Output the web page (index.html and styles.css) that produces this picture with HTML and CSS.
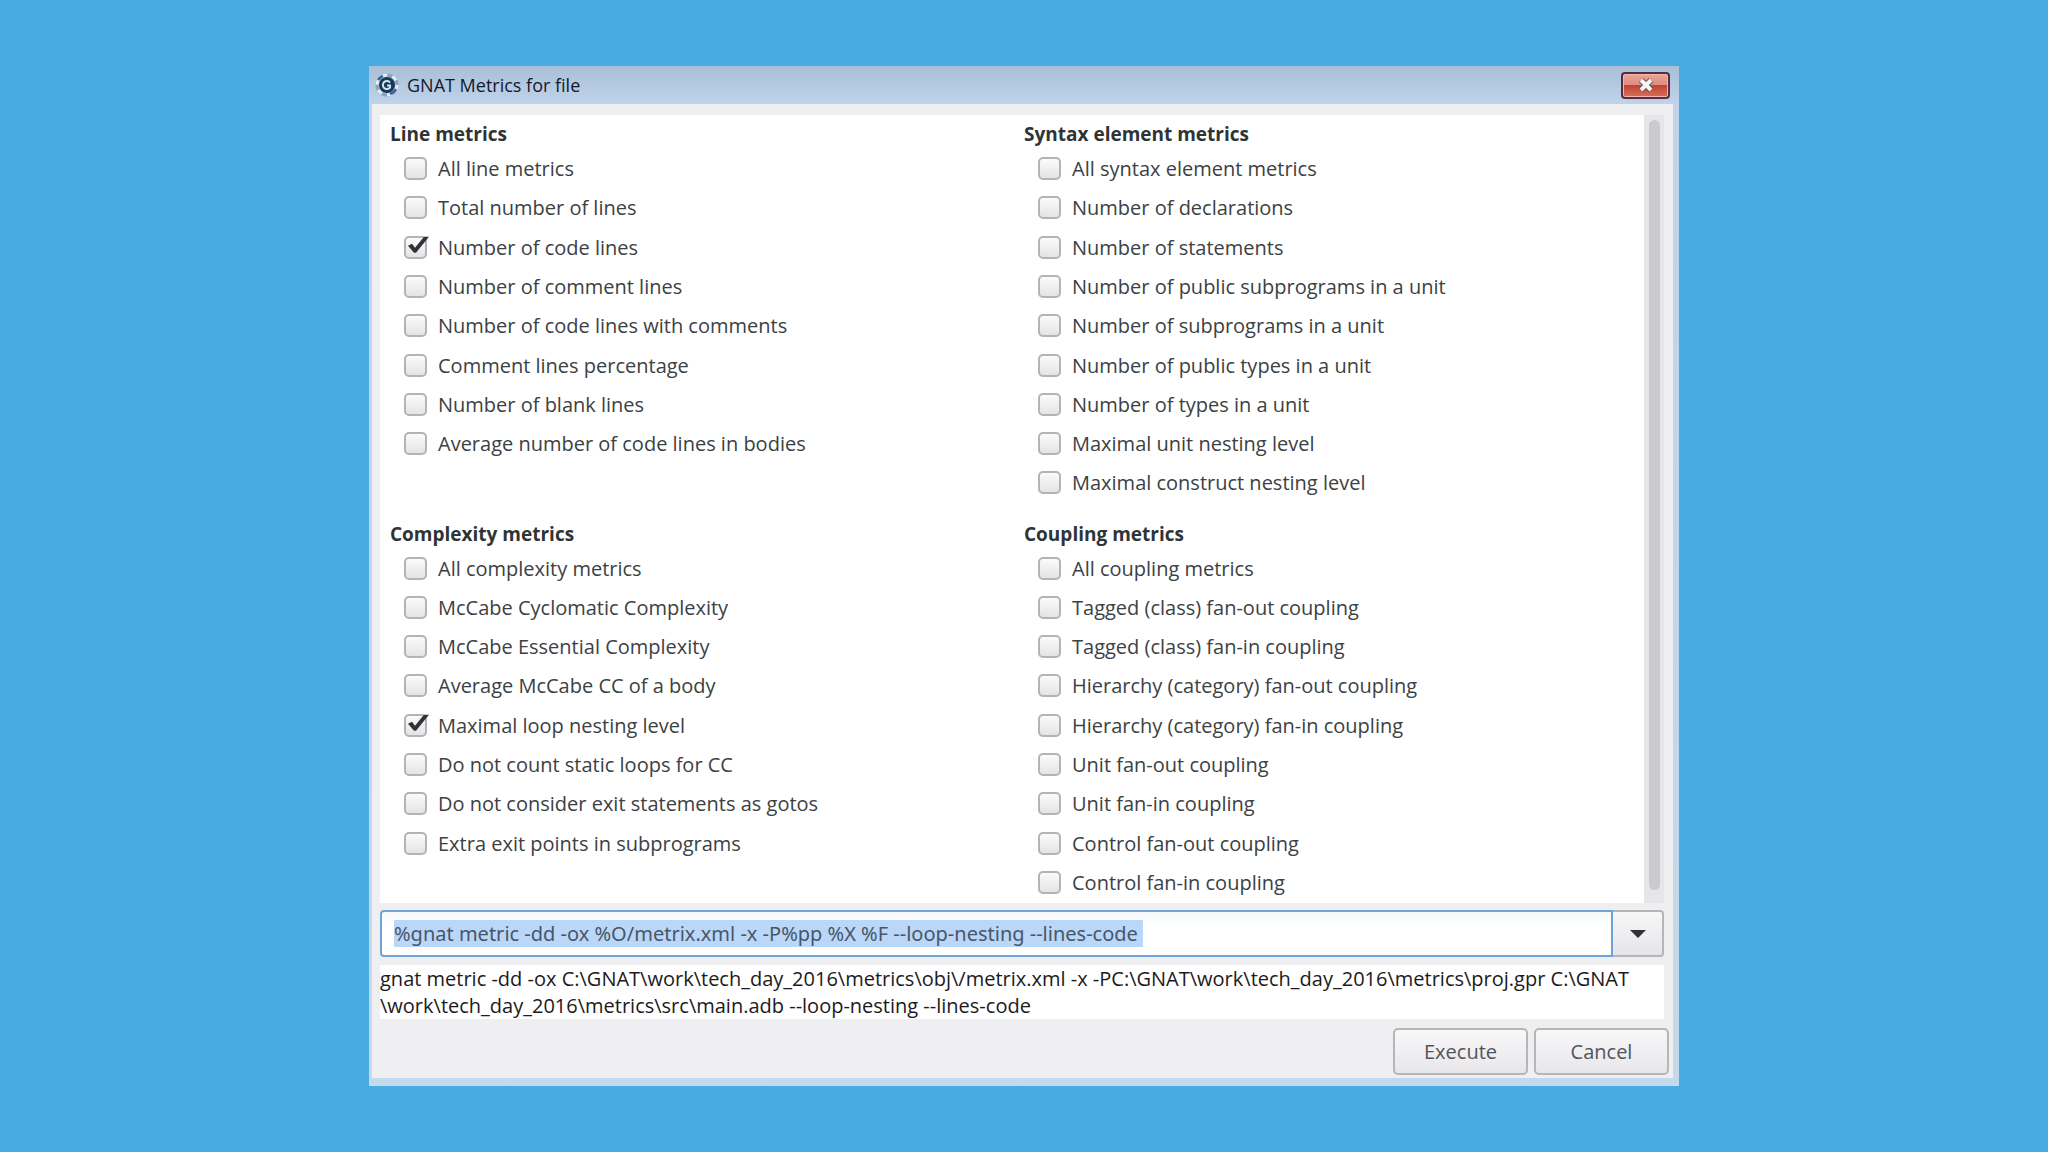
FILE: index.html
```
<!DOCTYPE html>
<html lang="en">
  <head>
    <meta charset="utf-8">
    <title>GNAT Metrics for file</title>
    <link rel="stylesheet" href="styles.css">
  </head>

  <body onload="document.getElementById('command').select()">
    <div class="window">
      <div class="titlebar">
        <svg class="logo" viewBox="0 0 24 24" aria-hidden="true">
          <circle cx="12" cy="12" r="10" fill="none" stroke="#8fa3bb" stroke-width="3"/>
          <circle cx="12" cy="12" r="10" fill="none" stroke="#e8edf0" stroke-width="3" stroke-dasharray="5 5.5"/>
          <path d="M3 7a10 10 0 0 1 5-4M21 16a10 10 0 0 1-6 5" fill="none" stroke="#3a5c96" stroke-width="2"/>
          <circle cx="12" cy="12" r="8" fill="#143a5e"/>
          <path d="M15 9.5a4 4 0 1 0 0 5v-2h-3" fill="none" stroke="#d5e2ec" stroke-width="2"/>
        </svg>
        <h1>GNAT Metrics for file</h1>
        <button class="close" type="button" aria-label="Close">
          <svg viewBox="0 0 18 14" aria-hidden="true">
            <path d="M4 2l10 10M14 2L4 12" fill="none" stroke="#6b4a4c" stroke-width="6"/>
            <path d="M4 2l10 10M14 2L4 12" fill="none" stroke="#f6f4f4" stroke-width="4"/>
          </svg>
        </button>
      </div>

      <form class="content">
        <div class="scrolled">
          <div class="metrics">
            <section class="group">
              <h2>Line metrics</h2>
              <label><input type="checkbox">All line metrics</label>
              <label><input type="checkbox">Total number of lines</label>
              <label><input type="checkbox" checked>Number of code lines</label>
              <label><input type="checkbox">Number of comment lines</label>
              <label><input type="checkbox">Number of code lines with comments</label>
              <label><input type="checkbox">Comment lines percentage</label>
              <label><input type="checkbox">Number of blank lines</label>
              <label><input type="checkbox">Average number of code lines in bodies</label>
            </section>

            <section class="group">
              <h2>Syntax element metrics</h2>
              <label><input type="checkbox">All syntax element metrics</label>
              <label><input type="checkbox">Number of declarations</label>
              <label><input type="checkbox">Number of statements</label>
              <label><input type="checkbox">Number of public subprograms in a unit</label>
              <label><input type="checkbox">Number of subprograms in a unit</label>
              <label><input type="checkbox">Number of public types in a unit</label>
              <label><input type="checkbox">Number of types in a unit</label>
              <label><input type="checkbox">Maximal unit nesting level</label>
              <label><input type="checkbox">Maximal construct nesting level</label>
            </section>

            <section class="group">
              <h2>Complexity metrics</h2>
              <label><input type="checkbox">All complexity metrics</label>
              <label><input type="checkbox">McCabe Cyclomatic Complexity</label>
              <label><input type="checkbox">McCabe Essential Complexity</label>
              <label><input type="checkbox">Average McCabe CC of a body</label>
              <label><input type="checkbox" checked>Maximal loop nesting level</label>
              <label><input type="checkbox">Do not count static loops for CC</label>
              <label><input type="checkbox">Do not consider exit statements as gotos</label>
              <label><input type="checkbox">Extra exit points in subprograms</label>
            </section>

            <section class="group">
              <h2>Coupling metrics</h2>
              <label><input type="checkbox">All coupling metrics</label>
              <label><input type="checkbox">Tagged (class) fan-out coupling</label>
              <label><input type="checkbox">Tagged (class) fan-in coupling</label>
              <label><input type="checkbox">Hierarchy (category) fan-out coupling</label>
              <label><input type="checkbox">Hierarchy (category) fan-in coupling</label>
              <label><input type="checkbox">Unit fan-out coupling</label>
              <label><input type="checkbox">Unit fan-in coupling</label>
              <label><input type="checkbox">Control fan-out coupling</label>
              <label><input type="checkbox">Control fan-in coupling</label>
            </section>
          </div>
          <div class="scrollbar"><div class="thumb"></div></div>
        </div>

        <div class="combo">
          <input id="command" type="text" aria-label="Command" spellcheck="false" autocomplete="off" value="%gnat metric -dd -ox %O/metrix.xml -x -P%pp %X %F --loop-nesting --lines-code ">
          <button type="button" aria-label="Previous commands">
            <svg viewBox="0 0 16 8" aria-hidden="true"><path d="M0 0h16L8 8z" fill="#2e3436"/></svg>
          </button>
        </div>

        <p class="preview">gnat metric -dd -ox C:\GNAT\work\tech_day_2016\metrics\obj\/metrix.xml -x -PC:\GNAT\work\tech_day_2016\metrics\proj.gpr C:\GNAT<wbr>\work\tech_day_2016\metrics\src\main.adb --loop-nesting --lines-code</p>

        <div class="actions">
          <button type="button">Execute</button>
          <button type="button">Cancel</button>
        </div>
      </form>
    </div>
  </body>
</html>
```
FILE: styles.css
```
* {
  box-sizing: border-box;
}

body {
  display: flex;
  min-height: 100vh;
  margin: 0;
  padding: 66px 369px;
  background: #4aabe2;
  color: #3c4143;
  font: 20px/27px "Open Sans", "Noto Sans", sans-serif;
}

button,
input {
  margin: 0;
  color: inherit;
  font: inherit;
}

/* window frame */
.window {
  display: flex;
  flex: 1;
  flex-direction: column;
  min-width: 0;
  padding: 0 6px 8px 3px;
  background: linear-gradient(#a9bfd7, #bfd4ea 38px, #c3d9ec);
}

.titlebar {
  display: flex;
  align-items: center;
  height: 38px;
  padding-left: 3px;
}

.logo {
  width: 24px;
  height: 24px;
  margin-right: 8px;
}

.titlebar h1 {
  flex: 1;
  margin: 0;
  color: #14182c;
  font-size: 18px;
  font-weight: 400;
}

.close {
  display: flex;
  align-items: center;
  justify-content: center;
  width: 49px;
  height: 27px;
  margin-right: 3px;
  padding: 0;
  border: 2px solid #5a2c40;
  border-radius: 4px;
  background: linear-gradient(#eaa598, #dd8e80 46%, #c2452f 50%, #d4705c);
  box-shadow: inset 0 0 0 1px #f0b9ae;
}

.close svg {
  width: 18px;
  height: 14px;
}

.content {
  display: flex;
  flex: 1;
  flex-direction: column;
  padding: 11px 9px 3px 8px;
  background: #efeef0;
}

/* metrics list */
.scrolled {
  display: flex;
  flex: 1;
  margin-bottom: 7px;
}

.metrics {
  display: grid;
  flex: 1;
  grid-template-rows: 1fr 1fr;
  grid-template-columns: 1fr 1fr;
  gap: 16px 14px;
  padding: 4px 0 1px 10px;
  background: #fff;
}

.group {
  display: grid;
  grid-template-rows: 30px repeat(9, 1fr);
}

.group h2 {
  margin: 0;
  color: #2e3436;
  font-size: 19px;
  font-weight: 700;
  line-height: 30px;
}

.group label {
  display: flex;
  align-items: center;
  padding-left: 14px;
}

.group input {
  position: relative;
  width: 23px;
  height: 23px;
  margin-right: 11px;
  border: 2px solid #b5b3b6;
  border-radius: 5px;
  background: linear-gradient(#fbfbfb, #e4e3e6);
  appearance: none;
}

.group input:checked::before {
  position: absolute;
  top: -2px;
  left: -2px;
  width: 25px;
  height: 23px;
  background: #2e3436;
  clip-path: polygon(4px 10px, 8px 8px, 11px 12px, 20px 1px, 25px 1px, 12px 17px, 10px 17px);
  content: "";
}

.scrollbar {
  display: flex;
  width: 20px;
  padding: 5px 4px 13px 5px;
  background: #e6e5e7;
}

.thumb {
  flex: 1;
  border-radius: 6px;
  background: #cbcacc;
}

/* command entry */
.combo {
  display: flex;
  height: 47px;
  margin-bottom: 8px;
}

.combo input {
  flex: 1;
  min-width: 0;
  padding: 0 12px;
  border: 2px solid #6da3d8;
  border-radius: 4px 0 0 4px;
  outline: 0;
  background: linear-gradient(#f5f8fb, #fff 12px);
  font-family: "Noto Sans", "Open Sans", sans-serif;
}

.combo input::selection {
  background: #bad6f8;
  color: #47566a;
}

.combo button {
  display: flex;
  align-items: center;
  justify-content: center;
  width: 51px;
  padding: 0;
  border: 2px solid #b8b5b8;
  border-left: 0;
  border-radius: 0 4px 4px 0;
  background: linear-gradient(#f8f7f8, #e6e4e7);
}

.combo svg {
  width: 16px;
  height: 8px;
}

.preview {
  margin: 0 0 9px;
  background: #fff;
  color: #1c1a20;
}

.actions {
  display: flex;
  justify-content: flex-end;
  gap: 6px;
  margin-right: -5px;
}

.actions button {
  width: 135px;
  height: 47px;
  padding: 0;
  border: 2px solid #b8b5b8;
  border-radius: 5px;
  background: linear-gradient(#f9f8f9, #e8e6e9);
  color: #50555a;
}
```
